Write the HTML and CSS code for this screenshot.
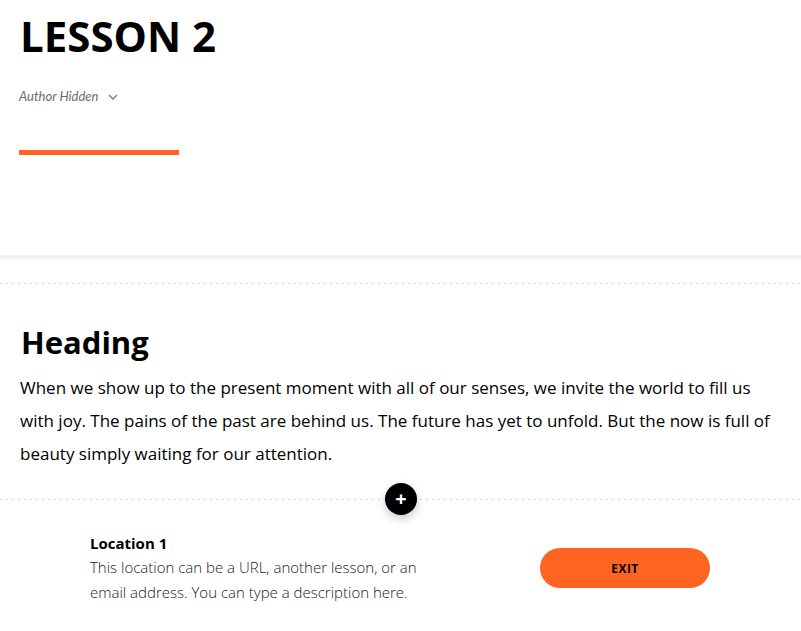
FILE: index.html
```html
<!DOCTYPE html>
<html lang="en">
<head>
  <meta charset="UTF-8" />
  <title>Lesson 2</title>
  <meta name="viewport" content="width=device-width, initial-scale=1" />
  <link rel="stylesheet" href="styles.css">
</head>
<body>

  <header class="lesson-header">
    <h1 class="lesson-title">LESSON 2</h1>
    <div class="author">
      <span>Author Hidden</span>
      <svg class="chevron" width="10" height="6" viewBox="0 0 10 6"><path d="M1 1l4 4 4-4" fill="none" stroke="#777" stroke-width="1.3"/></svg>
    </div>
    <div class="accent-bar"></div>
  </header>

  <div class="band"></div>

  <div class="dots"></div>

  <section class="block-text">
    <h2>Heading</h2>
    <p>When we show up to the present moment with all of our senses, we invite the world to fill us with joy. The pains of the past are behind us. The future has yet to unfold. But the now is full of beauty simply waiting for our attention.</p>
  </section>

  <div class="divider">
    <div class="dots"></div>
    <button class="add-block">+</button>
  </div>

  <section class="location">
    <div class="location-text">
      <h3>Location 1</h3>
      <p>This location can be a URL, another lesson, or an email address. You can type a description here.</p>
    </div>
    <button class="exit-button">EXIT</button>
  </section>

</body>
</html>
```

FILE: styles.css
```css
body {
  margin: 0;
  background: #fff;
  color: #000;
  font-family: 'Open Sans', sans-serif;
}

.lesson-header {
  padding: 7px 19px 100px;
}

.lesson-title {
  margin: 0 0 0 1px;
  font-size: 42px;
  line-height: 58px;
  font-weight: 700;
}

.author {
  display: flex;
  align-items: center;
  gap: 10px;
  margin-top: 23px;
  font-family: 'Lato', sans-serif;
  font-style: italic;
  font-size: 13px;
  color: #6b6b6b;
}

.chevron {
  margin-top: 1px;
}

.accent-bar {
  margin-top: 46px;
  width: 160px;
  height: 5px;
  background: #ff6422;
}

.band {
  height: 4px;
  background: #f2f2f2;
}

.dots {
  height: 1px;
  background: repeating-linear-gradient(90deg, #d4d4d4 0 2px, transparent 2px 6px);
}

.band + .dots {
  margin-top: 24px;
}

.block-text {
  padding: 37px 20px 29px;
}

.block-text h2 {
  margin: 0 0 8px 1px;
  font-size: 31px;
  line-height: 42px;
  font-weight: 700;
}

.block-text p {
  margin: 0;
  font-size: 17px;
  line-height: 33px;
}

.divider {
  position: relative;
}

.add-block {
  position: absolute;
  left: 385px;
  top: -16px;
  width: 32px;
  height: 32px;
  border: none;
  border-radius: 50%;
  background: #000;
  color: #fff;
  font-family: 'Open Sans', sans-serif;
  font-size: 20px;
  font-weight: 700;
  line-height: 32px;
  padding: 0;
  box-shadow: 0 4px 10px rgba(0,0,0,0.2);
}

.location {
  display: flex;
  justify-content: space-between;
  align-items: center;
  width: 620px;
  margin-left: 90px;
  padding-top: 31px;
}

.location-text {
  width: 350px;
}

.location-text h3 {
  margin: 0;
  font-size: 15px;
  line-height: 24px;
  font-weight: 700;
}

.location-text p {
  margin: 0;
  font-size: 15px;
  line-height: 25px;
  font-weight: 300;
  color: #222;
}

.exit-button {
  width: 170px;
  height: 40px;
  border: none;
  border-radius: 20px;
  background: #ff6422;
  color: #000;
  font-family: 'Open Sans', sans-serif;
  font-size: 12px;
  font-weight: 700;
  letter-spacing: 0.5px;
}
```
